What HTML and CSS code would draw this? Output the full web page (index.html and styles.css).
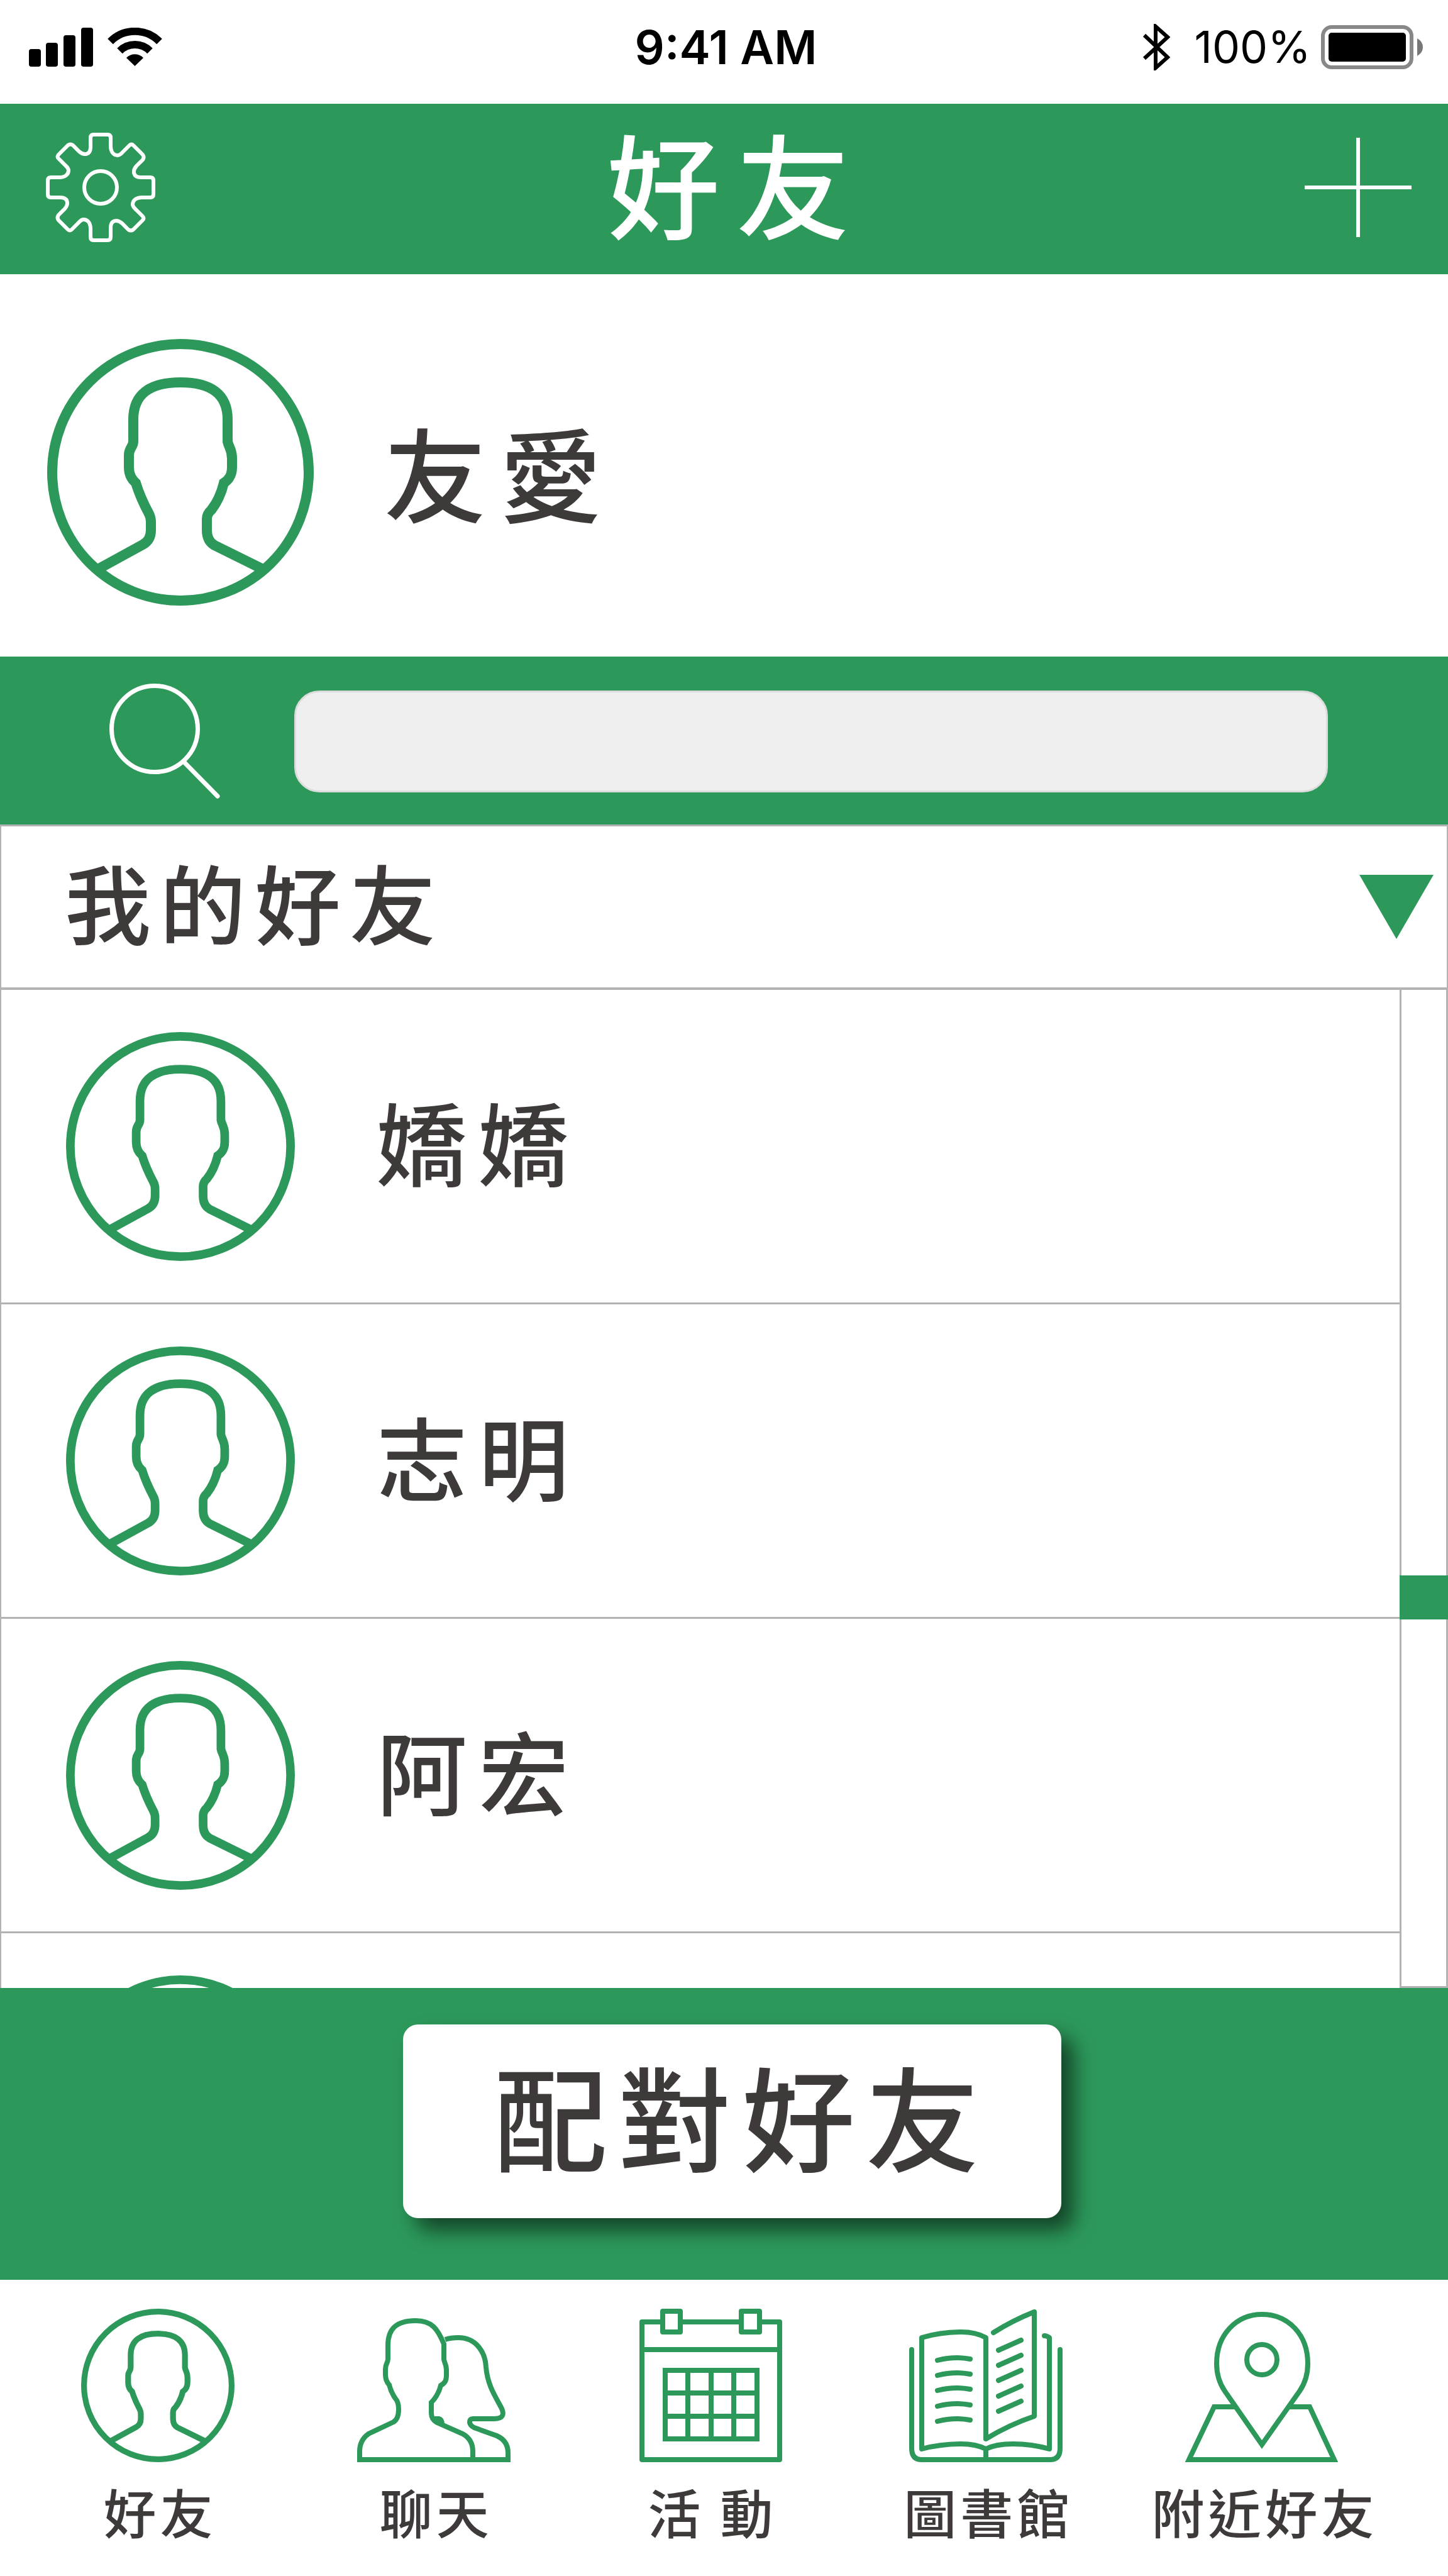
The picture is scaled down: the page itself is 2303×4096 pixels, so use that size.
FILE: index.html
```html
<!DOCTYPE html>
<html lang="zh-Hant">
<head>
<meta charset="utf-8">
<meta name="viewport" content="width=device-width, initial-scale=1">
<title>好友</title>
<link rel="stylesheet" href="styles.css">
</head>
<body>
<svg class="defs" aria-hidden="true">
  <symbol id="avatar" viewBox="0 0 424 424">
    <g fill="none" stroke="currentColor" stroke-width="16">
      <circle cx="212" cy="212" r="204"/>
      <path d="M79 367 L152 327 Q165 320 165 304 V291 Q165 284 162 278 Q148 252 141 229 C134 223 130 214 130 204 V185 C130 173 137 172 137 163 V128 C137 88 163 69 212 69 C261 69 287 88 287 128 V163 C289 173 294 175 294 190 V204 C294 216 290 223 281 229 Q275 254 261 272 Q254 278 254 286 V304 Q254 321 266 328 L345 367"/>
    </g>
  </symbol>
</svg>
<div class="app">
  <div class="status">
    <svg class="status-signal" viewBox="0 0 212 62" aria-label="訊號">
      <g>
        <rect x="0" y="34" width="19" height="28" rx="4"/>
        <rect x="27" y="24" width="19" height="38" rx="4"/>
        <rect x="55" y="12" width="19" height="50" rx="4"/>
        <rect x="83" y="0" width="19" height="62" rx="4"/>
        <path d="M168.500 61 L155 48 A19 19 0 0 1 182 48 Z"/>
      </g>
      <g fill="none" stroke="currentColor" stroke-width="12">
        <path d="M144.500 37 A34 34 0 0 1 192.500 37"/>
        <path d="M129.500 22 A55 55 0 0 1 207.500 22"/>
      </g>
    </svg>
    <span class="status-time">9:41 AM</span>
    <div class="status-right">
      <svg class="status-bluetooth" viewBox="0 0 44 74" aria-label="藍牙">
        <path d="M3 18 L40 53 L21 70 V4 L40 21 L3 55" fill="none" stroke="currentColor" stroke-width="6"/>
      </svg>
      <span class="status-percent">100%</span>
      <svg class="status-battery" viewBox="0 0 162 70" aria-label="電量">
        <rect x="3" y="3" width="141" height="64" rx="14" fill="none" stroke="#888" stroke-width="6"/>
        <rect x="12" y="12" width="123" height="46" rx="5"/>
        <path d="M153 21 Q162 26 162 35 Q162 44 153 49 Z" fill="#777"/>
      </svg>
    </div>
  </div>

  <header class="header">
    <button class="icon-button" type="button" aria-label="設定">
      <svg class="icon-gear" viewBox="-87 -87 174 174" fill="none" stroke="currentColor" stroke-width="6">
        <circle r="26"/>
        <path id="gear-quarter" d="M0 -84 H11 Q16 -84 16 -79 V-66 C16 -56 21 -51 27 -51 C31 -51 33 -54 36 -57 L46 -67 Q49 -70 52 -67 L67 -52 Q70 -48 67 -44 L57 -34 C50 -26 52 -16 64 -16 H79 Q84 -16 84 -11 V0"/>
        <use href="#gear-quarter" transform="rotate(90)"/>
        <use href="#gear-quarter" transform="rotate(180)"/>
        <use href="#gear-quarter" transform="rotate(270)"/>
      </svg>
    </button>
    <h1 class="header-title">好友</h1>
    <button class="icon-button" type="button" aria-label="新增好友">
      <svg class="icon-plus" viewBox="0 0 170 158" fill="none" stroke="currentColor" stroke-width="6">
        <path d="M0 79 H170 M85 0 V158"/>
      </svg>
    </button>
  </header>

  <section class="profile">
    <svg class="profile-avatar" aria-hidden="true"><use href="#avatar"/></svg>
    <span class="profile-name">友愛</span>
  </section>

  <form class="search">
    <label class="search-label" for="search" aria-label="搜尋">
      <svg class="icon-search" viewBox="0 0 176 184" fill="none" stroke="currentColor" stroke-width="7" stroke-linecap="round">
        <circle cx="72" cy="72" r="68.500"/>
        <path d="M120 126 L172 179"/>
      </svg>
    </label>
    <input class="search-input" id="search" type="search">
  </form>

  <div class="group">
    <h2 class="group-title">我的好友</h2>
    <button class="icon-button group-toggle" type="button" aria-label="收合">
      <svg class="icon-triangle" viewBox="0 0 118 102"><path d="M0 0 H118 L59 102 Z" fill="currentColor"/></svg>
    </button>
  </div>

  <div class="list">
    <ul class="rows">
      <li class="row"><svg class="row-avatar" aria-hidden="true"><use href="#avatar"/></svg><span class="row-name">嬌嬌</span></li>
      <li class="row"><svg class="row-avatar" aria-hidden="true"><use href="#avatar"/></svg><span class="row-name">志明</span></li>
      <li class="row"><svg class="row-avatar" aria-hidden="true"><use href="#avatar"/></svg><span class="row-name">阿宏</span></li>
      <li class="row"><svg class="row-avatar" aria-hidden="true"><use href="#avatar"/></svg></li>
    </ul>
    <div class="track"><div class="thumb"></div></div>
  </div>

  <div class="match">
    <button class="match-button" type="button">配對好友</button>
  </div>

  <nav class="tabs">
    <a class="tab" href="#friends">
      <svg class="tab-icon" aria-hidden="true"><use href="#avatar"/></svg>
      <span class="tab-label">好友</span>
    </a>
    <a class="tab" href="#chat">
      <svg class="tab-icon" viewBox="0 0 244 244" fill="none" stroke="currentColor" stroke-width="8" aria-hidden="true">
        <path d="M0 240 H244"/>
        <path d="M4 240 V227 Q4 209 18 199 L58 180 Q66 175 66 160 Q66 148 61 143 Q54 133 51 121 C47 117 45 111 45 104 V96 C45 87 49 87 49 80 V58 C49 32 62 19 93 19 C119 19 128 32 138 56 V80 C138 85 142 88 142 97 V106 C142 114 140 118 133 122 Q129 138 118 149 V166 Q118 176 127 181 L168 199 Q184 208 184 227 V240"/>
        <path d="M122 175 H130 Q135 176 135 184"/>
        <path d="M140 49 Q149 46 161 46 C190 46 204 70 205 93 C207 118 217 135 228 155 C236 169 231 175 218 175 H184 Q179 175 179 181 Q180 186 186 189 L222 202 Q240 210 240 229 V240"/>
      </svg>
      <span class="tab-label">聊天</span>
    </a>
    <a class="tab" href="#events">
      <svg class="tab-icon" viewBox="-10 0 244 244" fill="none" stroke="currentColor" stroke-width="8" stroke-linejoin="round" aria-hidden="true">
        <path d="M4 21 H223 V240 H4 Z M4 65 H223"/>
        <path d="M37 4 H65 V37 H37 Z M162 4 H191 V37 H162 Z" fill="#fff"/>
        <path d="M41 98 H187 V207 H41 Z M77 98 V207 M114 98 V207 M150 98 V207 M41 134 H187 M41 171 H187" stroke-linejoin="miter"/>
      </svg>
      <span class="tab-label">活 動</span>
    </a>
    <a class="tab" href="#library">
      <svg class="tab-icon" viewBox="0 0 244 244" fill="none" stroke="currentColor" stroke-width="8" stroke-linecap="round" stroke-linejoin="round" aria-hidden="true">
        <path d="M4 65 V222 Q4 240 20 240 H224 Q240 240 240 222 V65"/>
        <path d="M122 240 V223"/>
        <path d="M215 43 Q219 43 223 46 V223 Q195 215 165 215 Q138 215 122 223 Q106 215 83 215 Q50 215 20 223 V46 Q50 37 83 37 Q106 37 122 46 V207 Q160 184 199 171 V5 Q164 19 134 38"/>
        <path d="M45 82 Q72 75 97 80 M45 106 Q72 99 97 104 M45 130 Q72 123 97 128 M45 155 Q72 148 97 153 M45 179 Q72 172 97 177"/>
        <path d="M142 66 L178 50 M142 90 L178 74 M142 114 L178 98 M142 139 L178 123 M142 163 L178 147"/>
      </svg>
      <span class="tab-label">圖書館</span>
    </a>
    <a class="tab" href="#nearby">
      <svg class="tab-icon" viewBox="0 0 244 244" fill="none" stroke="currentColor" stroke-width="8" aria-hidden="true">
        <path d="M122 216 L63 131 C54 118 50 104 50 87 C50 42 81 9 122 9 C165 9 195 42 195 87 C195 104 191 118 182 131 Z"/>
        <circle cx="122" cy="81" r="24"/>
        <path d="M81 156 H46 L6 240 H237 L198 156 H165"/>
      </svg>
      <span class="tab-label">附近好友</span>
    </a>
  </nav>
</div>
</body>
</html>
```
FILE: styles.css
```css
:root {
  --green: #2c995a;
  --ink: #3e3a39;
  --line: #b3b3b3;
}

* {
  box-sizing: border-box;
}

body {
  margin: 0;
  background: #fff;
  color: var(--ink);
  font-family: "Noto Sans CJK TC", sans-serif;
  font-weight: 500;
  line-height: 1;
}

h1,
h2,
ul {
  margin: 0;
  padding: 0;
  font-weight: inherit;
  list-style: none;
}

svg {
  display: block;
  flex: none;
}

.defs {
  display: none;
}

.app {
  display: flex;
  flex-direction: column;
  height: 100vh;
}

.app > * {
  flex: none;
}

.icon-button {
  padding: 0;
  border: 0;
  background: none;
  color: inherit;
}

/* Status bar */
.status {
  display: grid;
  grid-template-columns: 1fr auto 1fr;
  align-items: center;
  min-height: 165px;
  padding: 0 40px 16px 46px;
  color: #000;
  font-family: Inter, "Liberation Sans", sans-serif;
}

.status-signal {
  width: 212px;
  height: 62px;
}

.status-time {
  font-size: 74px;
  font-weight: 600;
}

.status-right {
  display: flex;
  align-items: center;
  justify-content: flex-end;
}

.status-bluetooth {
  width: 44px;
  height: 74px;
  margin-right: 38px;
}

.status-percent {
  margin-right: 16px;
  font-size: 70px;
  font-weight: 400;
}

.status-battery {
  width: 162px;
  height: 70px;
}

/* Header */
.header {
  display: flex;
  align-items: center;
  justify-content: space-between;
  min-height: 271px;
  padding: 0 58px 6px 73px;
  background: var(--green);
  color: #fff;
}

.icon-gear {
  width: 174px;
  height: 174px;
}

.header-title {
  padding: 0 0 20px 20px;
  font-size: 180px;
  letter-spacing: 26px;
}

.icon-plus {
  width: 170px;
  height: 158px;
}

/* Own profile */
.profile {
  display: flex;
  align-items: center;
  gap: 112px;
  min-height: 608px;
  padding: 22px 75px 0;
}

.profile-avatar {
  width: 424px;
  height: 424px;
  color: var(--green);
}

.profile-name {
  padding-bottom: 4px;
  font-size: 162px;
  letter-spacing: 22px;
}

/* Search */
.search {
  display: flex;
  align-items: center;
  gap: 118px;
  min-height: 267px;
  padding: 2px 191px 0 174px;
  background: var(--green);
  color: #fff;
}

.icon-search {
  width: 176px;
  height: 184px;
}

.search-input {
  flex: 1;
  min-width: 0;
  height: 162px;
  padding: 0 40px;
  border: 3px solid #dcdcdc;
  border-radius: 40px;
  background: #efefef;
  color: var(--ink);
  font: inherit;
  font-size: 84px;
  appearance: none;
}

/* Friend group heading */
.group {
  display: flex;
  align-items: center;
  justify-content: space-between;
  min-height: 263px;
  padding: 0 21px 0 101px;
  border: 2px solid var(--line);
  border-width: 3px 2px 4px;
}

.group-title {
  padding-bottom: 20px;
  font-size: 137px;
  letter-spacing: 14px;
}

.group-toggle {
  color: var(--green);
}

.icon-triangle {
  width: 118px;
  height: 102px;
}

/* Friend list */
.app > .list {
  display: flex;
  flex: 1 1 0;
  min-height: 0;
  overflow: hidden;
}

.rows {
  flex: 1;
  border-left: 2px solid var(--line);
}

.row {
  display: flex;
  align-items: center;
  gap: 130px;
  min-height: 500px;
  padding-left: 103px;
  border-bottom: 3px solid var(--line);
}

.row-avatar {
  width: 364px;
  height: 364px;
  color: var(--green);
}

.row-name {
  padding-bottom: 20px;
  font-size: 144px;
  letter-spacing: 18px;
}

.track {
  position: relative;
  width: 77px;
  border: 3px solid var(--line);
  border-top: 0;
}

.thumb {
  position: absolute;
  top: 58.8%;
  right: -3px;
  left: -3px;
  height: 70px;
  background: var(--green);
}

/* Match call to action */
.match {
  display: flex;
  align-items: center;
  justify-content: center;
  min-height: 464px;
  padding: 0 0 40px 26px;
  background: var(--green);
}

.match-button {
  padding: 52px 114px 76px 145px;
  border: 0;
  border-radius: 24px;
  background: #fff;
  box-shadow: 20px 20px 32px rgba(0, 0, 0, 0.55);
  color: inherit;
  font: inherit;
  font-size: 180px;
  letter-spacing: 17px;
}

/* Tab bar */
.tabs {
  display: grid;
  grid-template-columns: repeat(5, 1fr);
  min-height: 471px;
  padding: 46px 76px 0 31px;
}

.tab {
  display: flex;
  flex-direction: column;
  align-items: center;
  gap: 36px;
  color: inherit;
  text-decoration: none;
}

.tab-icon {
  width: 244px;
  height: 244px;
  color: var(--green);
}

.tab-label {
  padding-left: 8px;
  font-size: 84px;
  letter-spacing: 6px;
  white-space: nowrap;
}
```
